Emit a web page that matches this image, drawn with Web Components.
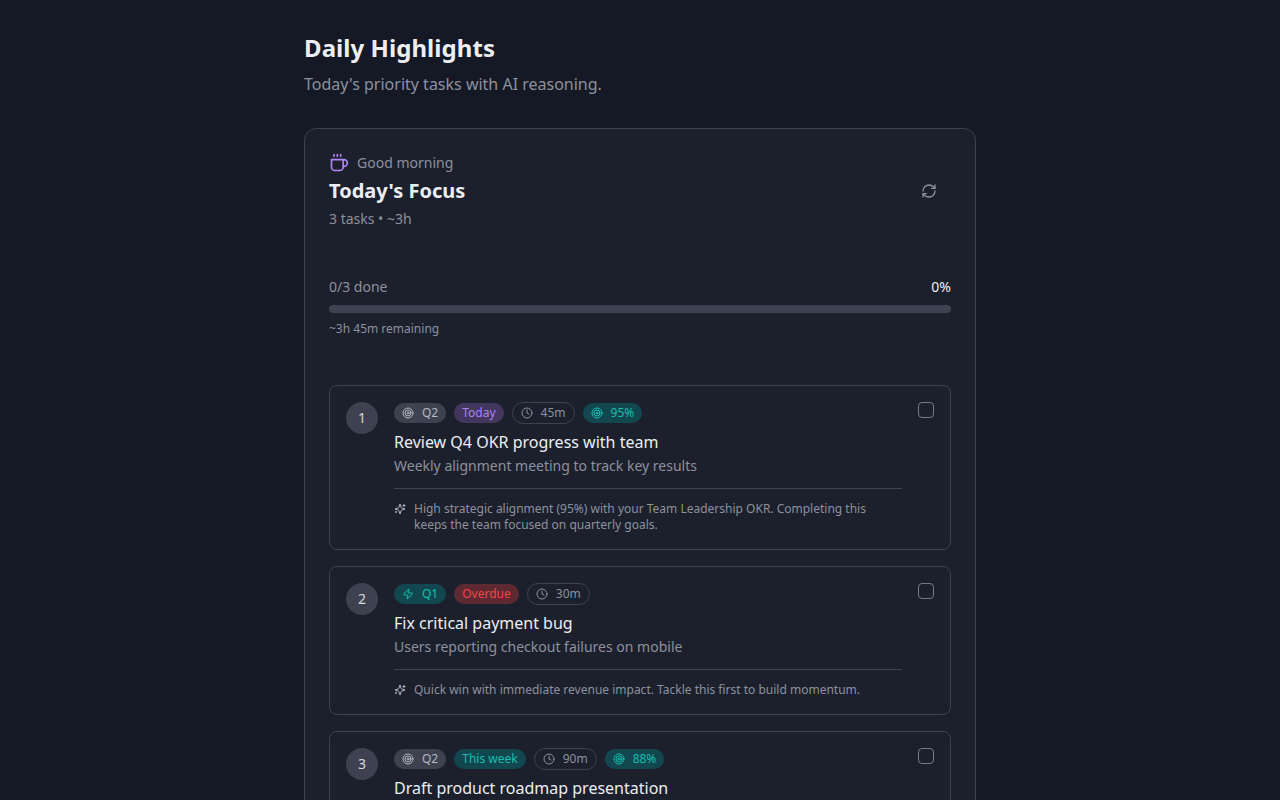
<!DOCTYPE html>
<html lang="en">
<head>
<meta charset="utf-8">
<title>Daily Highlights</title>
<style>
  html, body { margin: 0; height: 800px; overflow: hidden; background: #151925; }
  body { font-family: "Noto Sans", sans-serif; color: #eceef2; }
</style>
</head>
<body>
<daily-page></daily-page>

<script>
const ICONS = {
  coffee: `<path d="M17 8h1a4 4 0 1 1 0 8h-1"/><path d="M3 8h14v9a4 4 0 0 1-4 4H7a4 4 0 0 1-4-4Z"/><line x1="6" x2="6" y1="2" y2="4"/><line x1="10" x2="10" y1="2" y2="4"/><line x1="14" x2="14" y1="2" y2="4"/>`,
  refresh: `<path d="M3 12a9 9 0 0 1 9-9 9.75 9.75 0 0 1 6.74 2.74L21 8"/><path d="M21 3v5h-5"/><path d="M21 12a9 9 0 0 1-9 9 9.75 9.75 0 0 1-6.74-2.74L3 16"/><path d="M8 16H3v5"/>`,
  target: `<circle cx="12" cy="12" r="10"/><circle cx="12" cy="12" r="6"/><circle cx="12" cy="12" r="2"/>`,
  clock: `<circle cx="12" cy="12" r="10"/><polyline points="12 6 12 12 16 14"/>`,
  zap: `<path d="M4 14a1 1 0 0 1-.78-1.63l9.9-10.2a.5.5 0 0 1 .86.46l-1.92 6.02A1 1 0 0 0 13 10h7a1 1 0 0 1 .78 1.63l-9.9 10.2a.5.5 0 0 1-.86-.46l1.92-6.02A1 1 0 0 0 11 14z"/>`,
  sparkles: `<path d="M9.937 15.5A2 2 0 0 0 8.5 14.063l-6.135-1.582a.5.5 0 0 1 0-.962L8.5 9.936A2 2 0 0 0 9.937 8.5l1.582-6.135a.5.5 0 0 1 .963 0L14.063 8.5A2 2 0 0 0 15.5 9.937l6.135 1.581a.5.5 0 0 1 0 .964L15.5 14.063a2 2 0 0 0-1.437 1.437l-1.582 6.135a.5.5 0 0 1-.963 0z"/><path d="M20 3v4"/><path d="M22 5h-4"/><path d="M4 17v2"/><path d="M5 18H3"/>`
};

function icon(name, size) {
  return `<svg width="${size}" height="${size}" viewBox="0 0 24 24" fill="none" stroke="currentColor" stroke-width="2" stroke-linecap="round" stroke-linejoin="round">${ICONS[name]}</svg>`;
}

class TaskBadge extends HTMLElement {
  connectedCallback() {
    const name = this.getAttribute("icon");
    this.attachShadow({ mode: "open" }).innerHTML = `
      <style>
        :host {
          display: inline-flex;
          align-items: center;
          gap: 8px;
          height: 20px;
          padding: 0 8px;
          border-radius: 999px;
          font-size: 12px;
          line-height: 16px;
          white-space: nowrap;
        }
        :host([tone="muted"]) { background: #3e4250; color: #b4b8c2; }
        :host([tone="purple"]) { background: #43365f; color: #ab84f3; }
        :host([tone="teal"]) { background: #124750; color: #16bfae; }
        :host([tone="red"]) { background: #5c2a30; color: #f04747; }
        :host([tone="outline"]) { border: 1px solid #3e4250; color: #8d919d; }
        svg { display: block; flex: none; }
      </style>
      ${name ? icon(name, 12) : ""}<slot></slot>
    `;
  }
}
customElements.define("task-badge", TaskBadge);

class TaskCard extends HTMLElement {
  connectedCallback() {
    this.attachShadow({ mode: "open" }).innerHTML = `
      <style>
        :host {
          display: flex;
          gap: 16px;
          padding: 16px;
          border: 1px solid #3e4250;
          border-radius: 8px;
          background: #1c202c;
        }
        .num {
          flex: none;
          width: 32px;
          height: 32px;
          border-radius: 50%;
          background: #3e4250;
          color: #d5d8de;
          font-size: 14px;
          line-height: 32px;
          text-align: center;
        }
        .body { flex: 1; min-width: 0; }
        .badges { display: flex; align-items: center; gap: 8px; height: 22px; margin-bottom: 6px; }
        .title { font-size: 16px; line-height: 24px; font-weight: 400; color: #eceef2; }
        .desc { margin-top: 2px; font-size: 14px; line-height: 20px; color: #8d919d; }
        .why {
          display: flex;
          gap: 8px;
          margin-top: 12px;
          padding-top: 12px;
          border-top: 1px solid #3e4250;
          font-size: 12px;
          line-height: 16px;
          color: #8d919d;
        }
        .why svg { flex: none; margin-top: 2px; color: #b4b8c2; }
        .check {
          flex: none;
          box-sizing: border-box;
          width: 16px;
          height: 16px;
          border: 1px solid #757a87;
          border-radius: 4px;
        }
      </style>
      <div class="num">${this.getAttribute("num")}</div>
      <div class="body">
        <div class="badges"><slot name="badges"></slot></div>
        <div class="title">${this.getAttribute("title")}</div>
        <div class="desc">${this.getAttribute("desc")}</div>
        <div class="why">${icon("sparkles", 12)}<span><slot></slot></span></div>
      </div>
      <div class="check"></div>
    `;
  }
}
customElements.define("task-card", TaskCard);

class FocusCard extends HTMLElement {
  connectedCallback() {
    this.attachShadow({ mode: "open" }).innerHTML = `
      <style>
        :host {
          display: block;
          padding: 24px;
          border: 1px solid #3e4250;
          border-radius: 12px;
          background: #1c202c;
        }
        header { display: flex; align-items: center; justify-content: space-between; }
        .hello { display: flex; align-items: center; gap: 8px; font-size: 14px; line-height: 20px; color: #8d919d; }
        .hello svg { color: #b084f5; }
        h2 { margin: 4px 0; font-size: 20px; line-height: 28px; font-weight: 700; color: #eceef2; }
        .meta { font-size: 14px; line-height: 20px; color: #8d919d; }
        .refresh { display: flex; align-items: center; justify-content: center; width: 32px; height: 32px; margin-right: 6px; color: #8d919d; }
        .progress { margin-top: 48px; }
        .row { display: flex; justify-content: space-between; font-size: 14px; line-height: 20px; color: #8d919d; margin-bottom: 8px; }
        .row b { font-weight: 400; color: #eceef2; }
        .bar { height: 8px; border-radius: 999px; background: #3e4250; }
        .left { margin-top: 8px; font-size: 12px; line-height: 16px; color: #8d919d; }
        .tasks { display: flex; flex-direction: column; gap: 16px; margin-top: 48px; }
      </style>
      <header>
        <div>
          <div class="hello">${icon("coffee", 20)}<span>Good morning</span></div>
          <h2>Today's Focus</h2>
          <div class="meta">3 tasks • ~3h</div>
        </div>
        <div class="refresh">${icon("refresh", 16)}</div>
      </header>
      <div class="progress">
        <div class="row"><span>0/3 done</span><b>0%</b></div>
        <div class="bar"></div>
        <div class="left">~3h 45m remaining</div>
      </div>
      <div class="tasks"><slot></slot></div>
    `;
  }
}
customElements.define("focus-card", FocusCard);

class DailyPage extends HTMLElement {
  connectedCallback() {
    this.attachShadow({ mode: "open" }).innerHTML = `
      <style>
        :host { display: block; width: 672px; margin: 0 auto; padding-top: 32px; }
        h1 { margin: 0; font-size: 24px; line-height: 32px; font-weight: 700; letter-spacing: .06px; color: #eceef2; }
        p { margin: 8px 0 32px; font-size: 16px; line-height: 24px; color: #8d919d; }
      </style>
      <h1>Daily Highlights</h1>
      <p>Today's priority tasks with AI reasoning.</p>
      <focus-card>
        <task-card num="1" title="Review Q4 OKR progress with team" desc="Weekly alignment meeting to track key results">
          <task-badge slot="badges" tone="muted" icon="target">Q2</task-badge>
          <task-badge slot="badges" tone="purple">Today</task-badge>
          <task-badge slot="badges" tone="outline" icon="clock">45m</task-badge>
          <task-badge slot="badges" tone="teal" icon="target">95%</task-badge>
          High strategic alignment (95%) with your Team Leadership OKR. Completing this keeps the team focused on quarterly goals.
        </task-card>
        <task-card num="2" title="Fix critical payment bug" desc="Users reporting checkout failures on mobile">
          <task-badge slot="badges" tone="teal" icon="zap">Q1</task-badge>
          <task-badge slot="badges" tone="red">Overdue</task-badge>
          <task-badge slot="badges" tone="outline" icon="clock">30m</task-badge>
          Quick win with immediate revenue impact. Tackle this first to build momentum.
        </task-card>
        <task-card num="3" title="Draft product roadmap presentation" desc="">
          <task-badge slot="badges" tone="muted" icon="target">Q2</task-badge>
          <task-badge slot="badges" tone="teal">This week</task-badge>
          <task-badge slot="badges" tone="outline" icon="clock">90m</task-badge>
          <task-badge slot="badges" tone="teal" icon="target">88%</task-badge>
        </task-card>
      </focus-card>
    `;
  }
}
customElements.define("daily-page", DailyPage);
</script>
</body>
</html>
